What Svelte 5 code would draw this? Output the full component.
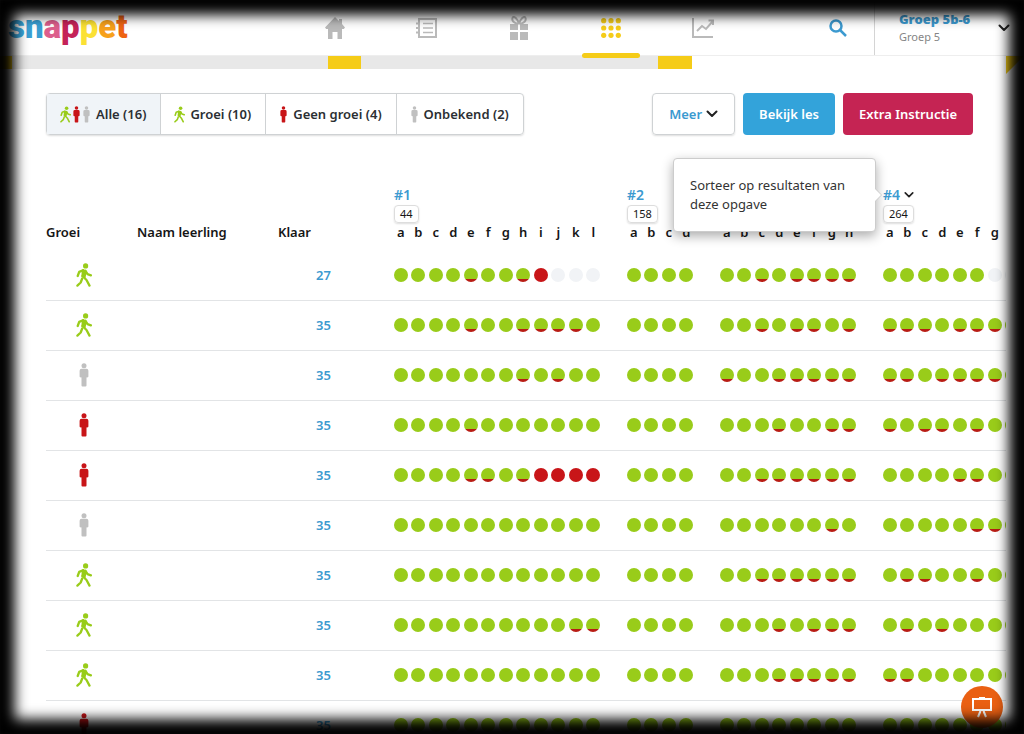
<script lang="ts">
  type Growth = 'up' | 'none' | 'unknown'
  type Row = { growth: Growth; done: number; results: string[] }

  const logo = [
    ['s', '#3aa6dc'],
    ['n', '#3a9fd3'],
    ['a', '#dc5f8d'],
    ['p', '#c52358'],
    ['p', '#fbe134'],
    ['e', '#f7a11b'],
    ['t', '#ee6413'],
  ]

  const filters: { id: string; label: string; icons: Growth[] }[] = [
    { id: 'all', label: 'Alle (16)', icons: ['up', 'none', 'unknown'] },
    { id: 'up', label: 'Groei (10)', icons: ['up'] },
    { id: 'none', label: 'Geen groei (4)', icons: ['none'] },
    { id: 'unknown', label: 'Onbekend (2)', icons: ['unknown'] },
  ]

  const exercises: { name?: string; count?: number; parts: string; sortable?: boolean }[] = [
    { name: '#1', count: 44, parts: 'abcdefghijkl' },
    { name: '#2', count: 158, parts: 'abcd' },
    { parts: 'abcdefgh' },
    { name: '#4', count: 264, parts: 'abcdefg', sortable: true },
  ]

  // g = good, p = good after a retry, r = wrong, x = not made yet
  const rows: Row[] = [
    { growth: 'up', done: 27, results: ['ggggpggprxxx', 'gggg', 'ggpgpppp', 'ggggggxx'] },
    { growth: 'up', done: 35, results: ['ggggpggppppg', 'gggg', 'ggpgppgp', 'pppgpppg'] },
    { growth: 'unknown', done: 35, results: ['gggggggpgpgg', 'gggg', 'pggppppp', 'ppgppppg'] },
    { growth: 'none', done: 35, results: ['ggggpggggggg', 'gggg', 'gggpggpp', 'pgppgpgg'] },
    { growth: 'none', done: 35, results: ['ggggppgprrrr', 'gggg', 'ggpppppp', 'ggggppgg'] },
    { growth: 'unknown', done: 35, results: ['gggggggggggg', 'gggg', 'ggggggpg', 'gggggppg'] },
    { growth: 'up', done: 35, results: ['gggggggggggg', 'gggg', 'ggpppppp', 'gppggpgg'] },
    { growth: 'up', done: 35, results: ['ggggggggggpp', 'gggg', 'gggpgppp', 'gpgpgggg'] },
    { growth: 'up', done: 35, results: ['gggggggggggg', 'gggg', 'gggppppp', 'ppgggggg'] },
    { growth: 'none', done: 35, results: ['gggggggggggg', 'gggg', 'gggggggg', 'gggggggg'] },
  ]

  let active = $state('all')
  let visible = $derived(active === 'all' ? rows : rows.filter((r) => r.growth === active))
</script>

{#snippet person(kind: Growth)}
  {#if kind === 'up'}
    <svg class="person walk" viewBox="0 0 16 24" fill="none" stroke="currentColor" stroke-width="2.300" stroke-linecap="round" stroke-linejoin="round">
      <circle cx="9.600" cy="2.900" r="2.600" fill="currentColor" stroke="none" />
      <path d="M7 7.500l2.600 1-1.100 5.500-2-1z" fill="currentColor" />
      <path d="M7.500 7.200L3.200 8.800 1.700 13" />
      <path d="M9.500 7.800l2 3.300 3.400 1.200" />
      <path d="M6.500 13l4 4 3 5.600" />
      <path d="M6.200 15.500l-1.500 4-3.300 3.100" />
    </svg>
  {:else}
    <svg class="person {kind}" viewBox="0 0 10 24" fill="currentColor">
      <circle cx="5" cy="2.800" r="2.500" />
      <path d="M2.600 5.800h4.800a2 2 0 0 1 2 2v5.400a1.200 1.200 0 0 1-1.900 1v8.200a1 1 0 0 1-1 1h-3a1 1 0 0 1-1-1v-8.200a1.200 1.200 0 0 1-1.900-1V7.800a2 2 0 0 1 2-2z" />
    </svg>
  {/if}
{/snippet}

{#snippet chevron(width = 12)}
  <svg {width} height="8" viewBox="0 0 12 8" fill="none" stroke="#222" stroke-width="2" stroke-linecap="round" stroke-linejoin="round"><path d="M1.500 1.500L6 6l4.500-4.500" /></svg>
{/snippet}

<div class="page">
  <header class="topbar">
    <a class="logo" href="#home" aria-label="snappet">{#each logo as [letter, color]}<span style:color>{letter}</span>{/each}</a>
    <nav>
      <a href="#home" aria-label="Home">
        <svg width="20" height="22" viewBox="0 0 20 22" fill="currentColor"><path d="M10 0l4 4V2h3v5l3 3.500-1.200 1.500H17v10h-4.500v-7h-5v7H3V12H1.200L0 10.500z" /></svg>
      </a>
      <a href="#lessen" aria-label="Lessen">
        <svg width="22" height="20" viewBox="0 0 22 20" fill="none" stroke="currentColor" stroke-width="2"><path d="M3 1h17v18H3zM0 5.500h4M0 10h4M0 14.500h4" /><path d="M7 5.500h10M7 10h10M7 14.500h10" stroke-width="1.500" /></svg>
      </a>
      <a href="#beloningen" aria-label="Beloningen">
        <svg width="18" height="24" viewBox="0 0 18 24" fill="currentColor"><path d="M0 8h8v6H0zM10 8h8v6h-8zM0 16h8v8H0zM10 16h8v8h-8z" /><path d="M8.500 8C4 7 1.500 5 2.500 2S8 3 9 8c1-5 5.500-9 6.500-6S14 7 9.500 8" fill="none" stroke="currentColor" stroke-width="2" /></svg>
      </a>
      <a href="#resultaten" class="current" aria-label="Resultaten">
        <svg width="20" height="20" viewBox="0 0 20 20" fill="currentColor">
          {#each [2.7, 10, 17.3] as cy}{#each [2.7, 10, 17.3] as cx}<circle {cx} {cy} r="2.600" />{/each}{/each}
        </svg>
      </a>
      <a href="#groei" aria-label="Groei">
        <svg width="22" height="20" viewBox="0 0 22 20" fill="none" stroke="currentColor" stroke-width="2"><path d="M1 0v19h20M5 13l5-5 4 3 7-8M16.500 2.500H21V7" /></svg>
      </a>
    </nav>
    <button class="search" type="button" aria-label="Zoeken">
      <svg width="18" height="18" viewBox="0 0 18 18" fill="none" stroke="currentColor" stroke-width="2.500"><circle cx="7" cy="7" r="5.500" /><path d="M11 11l6 6" /></svg>
    </button>
    <button class="group" type="button">
      <span class="group-text"><b>Groep 5b-6</b><small>Groep 5</small></span>
      {@render chevron()}
    </button>
  </header>

  <div class="ribbon"><i class="yellow"></i><i class="grey"></i><i class="yellow"></i><i class="grey"></i><i class="yellow"></i><i></i><i class="fold"></i></div>

  <main>
    <div class="toolbar">
      <div class="filters" role="group" aria-label="Groei">
        {#each filters as f}
          <button type="button" class:active={active === f.id} aria-pressed={active === f.id} onclick={() => (active = f.id)}>
            <span class="icons">{#each f.icons as icon}{@render person(icon)}{/each}</span>{f.label}
          </button>
        {/each}
      </div>
      <div class="actions">
        <button type="button" class="more">Meer {@render chevron()}</button>
        <button type="button" class="lesson">Bekijk les</button>
        <button type="button" class="extra">Extra Instructie</button>
      </div>
    </div>

    <table>
      <colgroup>
        <col class="c-growth" /><col class="c-name" /><col class="c-done" />
        <col class="c-12" /><col class="c-4" /><col class="c-8" /><col class="c-8" />
      </colgroup>
      <thead>
        <tr>
          <th scope="col">Groei</th>
          <th scope="col">Naam leerling</th>
          <th scope="col">Klaar</th>
          {#each exercises as ex}
            <th scope="col">
              {#if ex.name}
                <a class="ex-name" href="#opgave">{ex.name}{#if ex.sortable}{@render chevron(10)}{/if}</a>
                <span class="count">{ex.count}</span>
              {/if}
              <span class="parts">
                {#each ex.parts as part}<span>{part}</span>{/each}
                {#if ex.sortable}<span></span>{/if}
              </span>
              {#if ex.sortable}
                <div class="tooltip" role="tooltip">Sorteer op resultaten van deze opgave</div>
              {/if}
            </th>
          {/each}
        </tr>
      </thead>
      <tbody>
        {#each visible as row}
          <tr>
            <td class="growth">{@render person(row.growth)}</td>
            <td></td>
            <td class="done"><a href="#leerling">{row.done}</a></td>
            {#each row.results as result}
              <td><span class="parts">{#each result as r}<span><i class="dot {r}"></i></span>{/each}</span></td>
            {/each}
          </tr>
        {/each}
      </tbody>
    </table>
  </main>

  <button class="board" type="button" aria-label="Digibord">
    <svg width="22" height="22" viewBox="0 0 22 22" fill="none" stroke="#fff" stroke-width="2"><path d="M2 3h18v11H2zM8 2h6M9.500 15L7 21M12.500 15l2.500 6" /></svg>
  </button>
  <div class="vignette"></div>
</div>

<style>
  :global(body) { background: #fff; }
  .page {
    height: 100vh;
    overflow: hidden;
    position: relative;
    background: #fff;
    color: #2b2f33;
    font: 600 13px/20px "Noto Sans", sans-serif;
  }
  .page * { box-sizing: border-box; }
  a { text-decoration: none; color: #3c9ad0; }
  button {
    font: inherit;
    color: inherit;
    background: none;
    border: 0;
    padding: 0;
    cursor: pointer;
  }
  svg { flex-shrink: 0; }

  .topbar {
    display: flex;
    height: 56px;
    border-bottom: 1px solid #eee;
  }
  .logo {
    width: 289px;
    padding-left: 8px;
    font: 900 33px/54px Roboto, "Liberation Sans", sans-serif;
  }
  nav { display: flex; flex: 1; max-width: 460px; }
  nav a {
    flex: 1;
    display: flex;
    justify-content: center;
    align-items: center;
    color: #bababa;
    position: relative;
  }
  nav a.current { color: #f5cc18; }
  nav a.current::after {
    content: '';
    position: absolute;
    bottom: -3px;
    width: 58px;
    height: 5px;
    border-radius: 3px;
    background: #f5cc18;
  }
  .search {
    width: 72px;
    margin-left: auto;
    color: #3c9ad0;
    display: grid;
    place-items: center;
  }
  .group {
    display: flex;
    align-items: center;
    justify-content: space-between;
    width: 150px;
    padding: 0 14px 0 24px;
    border-left: 1px solid #d4d4d4;
    text-align: left;
  }
  .group-text { display: flex; flex-direction: column; line-height: 18px; }
  .group b { color: #3c9ad0; }
  .group small { font-size: 11px; font-weight: 400; color: #858585; }

  .ribbon {
    display: grid;
    grid-template-columns: 12px 316px 33px 297px 34px 1fr 18px;
    grid-template-rows: 13px;
    height: 13px;
  }
  .yellow { background: #f5cc18; }
  .grey { background: #e8e8e8; }
  .fold {
    height: 18px;
    background: #f5cc18;
    clip-path: polygon(0 0, 100% 0, 0 100%);
  }

  main {
    margin-right: 18px;
    padding: 24px 33px 0 46px;
    overflow-x: clip;
  }
  .toolbar { display: flex; justify-content: space-between; height: 42px; }
  .filters { display: flex; border: 1px solid #cfd2d4; border-radius: 4px; box-shadow: 0 1px 2px #0002; }
  .filters button {
    display: flex;
    align-items: center;
    gap: 5px;
    padding: 0 14px 0 13px;
    white-space: nowrap;
  }
  .filters button + button { border-left: 1px solid #cfd2d4; }
  .filters button.active { background: #f0f4f8; }
  .icons { display: flex; gap: 1px; }
  .icons .person { width: 9px; height: 17px; }
  .icons .walk { width: 11px; }
  .person { display: block; height: 24px; }
  .walk { color: #99cc1a; }
  .none { color: #c81518; }
  .unknown { color: #c0c0c0; }

  .actions { display: flex; gap: 8px; }
  .actions button { padding: 0 16px; border-radius: 4px; white-space: nowrap; }
  .actions .more {
    display: flex;
    align-items: center;
    gap: 4px;
    color: #3c9ad0;
    border: 1px solid #cfd2d4;
    box-shadow: 0 1px 2px #0002;
  }
  .actions .lesson { background: #33a3da; color: #fff; }
  .actions .extra { background: #c52453; color: #fff; }

  table {
    table-layout: fixed;
    width: 998px;
    margin-top: 50px;
    border-collapse: collapse;
  }
  .c-growth { width: 91px; }
  .c-name { width: 141px; }
  .c-done { width: 114px; }
  .c-12 { width: 233px; }
  .c-4 { width: 93px; }
  .c-8 { width: 163px; }
  th {
    position: relative;
    padding: 0 0 9px;
    text-align: left;
    vertical-align: bottom;
    font-weight: 600;
    line-height: 18px;
    color: #161616;
  }
  .ex-name {
    display: flex;
    align-items: center;
    gap: 4px;
    height: 20px;
    padding-left: 2px;
    font-size: 14px;
  }
  .count {
    display: inline-block;
    vertical-align: top;
    height: 18px;
    margin-left: 2px;
    padding: 0 5px;
    border: 1px solid #ddd;
    border-radius: 4px;
    box-shadow: 0 1px 2px #0002;
    font-size: 11px;
    font-weight: 400;
    line-height: 16px;
  }
  .parts { display: flex; margin-right: 23px; }
  .parts > span { flex: 1; display: flex; justify-content: center; }
  .tooltip {
    position: absolute;
    right: calc(100% + 5px);
    top: -27px;
    width: 203px;
    padding: 17px 16px;
    background: #fff;
    border: 1px solid #ccc;
    border-radius: 4px;
    box-shadow: 0 4px 12px #0005;
    font-size: 13px;
    font-weight: 400;
    line-height: 19px;
    color: #333;
    z-index: 1;
  }
  .tooltip::after {
    content: '';
    position: absolute;
    left: 100%;
    top: 30px;
    border: 6px solid transparent;
    border-left-color: #fff;
    border-right: 0;
    filter: drop-shadow(1px 0 0 #ccc);
  }
  td { height: 50px; padding: 0; border-bottom: 1px solid #e2e4e6; }
  .growth { padding-left: 30px; }
  .growth .person { width: 16px; }
  .done { padding-left: 38px; }
  .dot { width: 14px; height: 14px; border-radius: 50%; }
  .g { background: #99cc1a; }
  .p { background: linear-gradient(#99cc1a 11px, #b81c14 11px); }
  .r { background: #c81518; }
  .x { background: #f1f3f6; }

  .board {
    position: absolute;
    right: 21px;
    bottom: 6px;
    width: 42px;
    height: 42px;
    border-radius: 50%;
    background: #ea6013;
    display: grid;
    place-items: center;
  }
  .vignette {
    position: absolute;
    inset: 0;
    box-shadow: inset 0 0 13px 15px #000;
    pointer-events: none;
    z-index: 2;
  }
</style>
